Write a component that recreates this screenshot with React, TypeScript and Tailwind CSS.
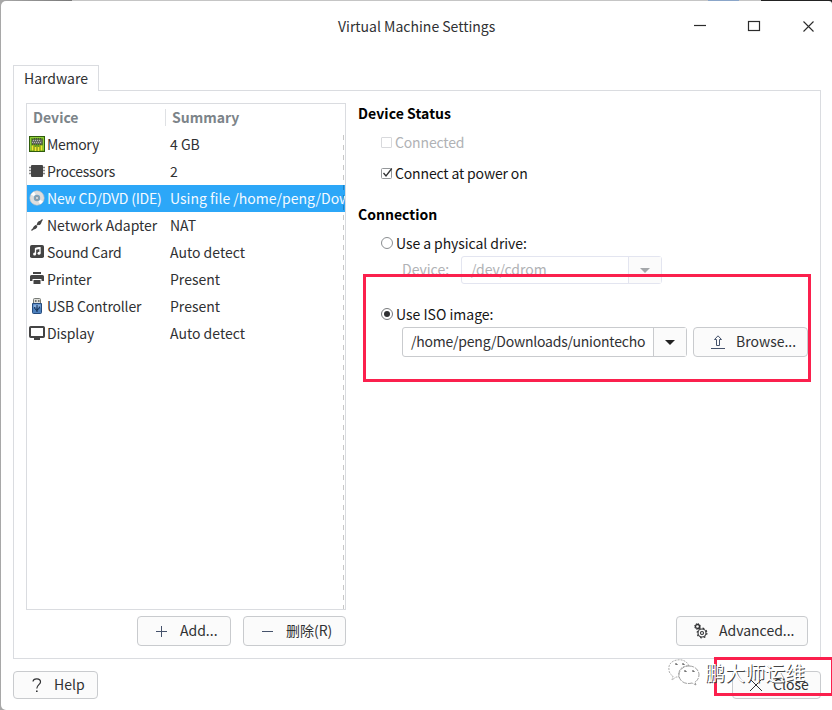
import React from "react";

const font =
  "font-['Noto_Sans_CJK_SC','Noto_Sans',sans-serif]";

type IconProps = { children: React.ReactNode; size?: number };

function Svg({ children, size = 16 }: IconProps) {
  return (
    <svg width={size} height={size} viewBox={`0 0 ${size} ${size}`} fill="none" className="block shrink-0">
      {children}
    </svg>
  );
}

const MemoryIcon = () => (
  <Svg>
    <rect x="0.500" y="0.500" width="15" height="15" fill="#62a01c" stroke="#2f5c0c" />
    <path d="M1.500 14.500V1.500H14.500V14.500" stroke="#92cf3b" />
    <path d="M3.500 3v6M5.500 2v7M7.500 2v7M9.500 2v7M11.500 2v7M13 3v6" stroke="#464a40" />
    <rect x="2.500" y="3.500" width="11" height="4.500" rx="2" fill="#666b61" />
    <path d="M4 4.500h8M3 6.500h9" stroke="#b4b7af" strokeDasharray="1 1" />
    <path d="M3.500 9.500v5M6.500 11v4M9.500 11v4M12.500 9.500v5" stroke="#f0e832" strokeWidth="1.800" />
    <path d="M5 9v5M11 9v5M8 10v5" stroke="#b4a51c" />
  </Svg>
);

const CpuIcon = () => (
  <Svg>
    <rect x="2" y="2" width="12" height="12" rx="1" fill="#444" />
    <path d="M0 4.500h2M0 7.500h2M0 10.500h2M14 4.500h2M14 7.500h2M14 10.500h2" stroke="#858585" strokeWidth="1.500" />
  </Svg>
);

const DiscIcon = () => (
  <Svg>
    <circle cx="8" cy="8" r="7.200" fill="#dedede" stroke="#c3c3c3" strokeWidth="0.600" />
    <path d="M8 8L2 4.500A7 7 0 0 1 5 1.700zM8 8l6 3.500a7 7 0 0 1-3 2.800z" fill="#fff" />
    <circle cx="8" cy="8" r="3.200" fill="#7ba4bf" />
    <circle cx="8" cy="8" r="2" fill="#969ba0" />
    <circle cx="8" cy="8" r="0.900" fill="#e2eef5" />
  </Svg>
);

const NetworkIcon = () => (
  <Svg>
    <path d="M2.500 13.500L13.500 2.500" stroke="#444" strokeWidth="1.200" />
    <path d="M4 12.500c-.2-2 .8-4 3-4.500l1.500 1.500c-.7 2-2.500 3.200-4.500 3zM8 6.500C8.500 4.500 10.500 3.500 12.800 3.500c0 2.200-1 4.300-3 4.800z" fill="#444" />
    <path d="M6.800 7.200l2.400 2.400" stroke="#fff" strokeWidth="0.800" />
  </Svg>
);

const SoundIcon = () => (
  <Svg>
    <rect x="1" y="1" width="14" height="13" rx="1.800" fill="#444" />
    <path d="M6.500 10V4.700l4.500-.9v5.200" stroke="#fff" strokeWidth="1.300" />
    <path d="M6.500 4.700l4.500-.7" stroke="#fff" strokeWidth="2" />
    <circle cx="5.600" cy="10.100" r="1.500" fill="#fff" />
    <circle cx="10" cy="9.300" r="1.500" fill="#fff" />
  </Svg>
);

const PrinterIcon = () => (
  <Svg>
    <path d="M4 1h8v2H4zM2.500 4h11A1.500 1.500 0 0 1 15 5.500V10h-2.500V8h-9v2H1V5.500A1.500 1.500 0 0 1 2.500 4zM4.500 9h7v4h-7z" fill="#444" />
  </Svg>
);

const UsbIcon = () => (
  <Svg>
    <rect x="4.500" y="0.500" width="7" height="6" rx="1" fill="#ddded9" stroke="#777a76" />
    <path d="M6 3h1.500M9 3h1.500" stroke="#50534f" strokeWidth="1.500" />
    <path d="M3.500 5.500h9v9q0 1-1 1h-7q-1 0-1-1z" fill="#4d80bd" stroke="#254b7c" />
    <path d="M4.500 6.500h7v3h-7z" fill="#86aede" />
    <path d="M8 7v7M5.700 9v1.500L8 12.500M10.300 8.500v1.800L8 12" stroke="#10294a" />
  </Svg>
);

const DisplayIcon = () => (
  <Svg>
    <path d="M1.800 1h12.400A1.800 1.800 0 0 1 16 2.800v8.400a1.800 1.800 0 0 1-1.800 1.800H11v2H5v-2H1.800A1.800 1.800 0 0 1 0 11.200V2.800A1.800 1.800 0 0 1 1.800 1zM2 3v8h12V3z" fill="#444" fillRule="evenodd" />
  </Svg>
);

const rows = [
  { name: "Memory", tracking: "tracking-[-0.3px]", summary: "4 GB", icon: <MemoryIcon /> },
  { name: "Processors", tracking: "tracking-[-0.28px]", summary: "2", icon: <CpuIcon /> },
  { name: "New CD/DVD (IDE)", tracking: "tracking-[-0.2px]", summary: "Using file /home/peng/Downloads", icon: <DiscIcon />, selected: true },
  { name: "Network Adapter", tracking: "tracking-[-0.03px]", summary: "NAT", icon: <NetworkIcon /> },
  { name: "Sound Card", tracking: "tracking-[-0.2px]", summary: "Auto detect", icon: <SoundIcon /> },
  { name: "Printer", tracking: "tracking-[-0.1px]", summary: "Present", icon: <PrinterIcon /> },
  { name: "USB Controller", tracking: "tracking-[-0.18px]", summary: "Present", icon: <UsbIcon /> },
  { name: "Display", tracking: "tracking-[-0.1px]", summary: "Auto detect", icon: <DisplayIcon /> },
];

function Button({ icon, label, className }: { icon: React.ReactNode; label: string; className: string }) {
  return (
    <button className={`flex shrink-0 items-center rounded border border-[#c9cbce] bg-[#fbfbfb] text-[#303133] ${className}`}>
      {icon}
      <span className="pb-[2px] whitespace-nowrap">{label}</span>
    </button>
  );
}

function DeviceTree() {
  return (
    <div className="relative h-[507px] w-[320px] overflow-hidden border border-[#dadce0]">
      <div className="flex h-[27px] items-center font-bold text-[#7c8489]">
        <div className="w-[138px] pb-[2px] pl-[6px]">Device</div>
        <div className="h-[17px] w-px bg-[#dfe1e4]" />
        <div className="pb-[2px] pl-[6px]">Summary</div>
      </div>
      {rows.map((r) => (
        <div
          key={r.name}
          className={`flex h-[27px] items-center pb-[2px] pl-[2px] whitespace-nowrap ${r.selected ? "bg-[#2ca7f8] text-[#f4faff]" : "text-[#303133]"}`}
        >
          {r.icon}
          <span className={`ml-[2px] w-[123px] shrink-0 ${r.tracking}`}>{r.name}</span>
          <span>{r.summary}</span>
        </div>
      ))}
      <div className="absolute top-[31px] bottom-0 left-[316px] w-px bg-[repeating-linear-gradient(to_bottom,rgba(0,0,0,0.22)_0px,rgba(0,0,0,0.22)_5px,transparent_5px,transparent_10px)]" />
    </div>
  );
}

function Settings() {
  return (
    <div className="flex h-[507px] w-[450px] flex-col text-[#161616]">
      <div className="h-[20px] font-bold leading-[20px] tracking-[0.06px] text-black">Device Status</div>
      <div className="mt-[9px] ml-[23px] flex h-[20px] items-center tracking-[-0.15px] text-[#b0b2b5]">
        <span className="mr-[3px] h-[11px] w-[11px] rounded-[1px] border border-[#d8d9dc]" />
        Connected
      </div>
      <div className="mt-[11px] ml-[23px] flex h-[20px] items-center tracking-[-0.15px]">
        <svg width="12" height="13" viewBox="0 0 12 13" fill="none" className="mr-[2px]">
          <rect x="0.500" y="1.500" width="10" height="10" rx="1" stroke="#94979a" />
          <path d="M2.500 6l2.500 3L10.800 1.500" stroke="#303133" strokeWidth="1.300" />
        </svg>
        Connect at power on
      </div>
      <div className="mt-[21px] h-[20px] font-bold leading-[20px] text-black">Connection</div>
      <div className="mt-[9px] ml-[23px] flex h-[20px] items-center tracking-[-0.07px]">
        <span className="mr-[3px] h-[12px] w-[12px] rounded-full border border-[#8b8e91]" />
        Use a physical drive:
      </div>
      <div className="mt-[3px] ml-[44px] flex h-[28px] items-center text-[#b0b2b5]">
        <span className="w-[59px] pb-[2px]">Device:</span>
        <div className="flex h-[28px] w-[201px] rounded-[3px] border border-[#e3e5f0]">
          <span className="w-[166px] pl-[9px] leading-[24px]">/dev/cdrom</span>
          <span className="flex grow items-center justify-center border-l border-[#e3e5f0] bg-[#fbfbfb]">
            <svg width="10" height="5" viewBox="0 0 10 5"><path d="M0 0h10L5 5z" fill="#a4a7aa" /></svg>
          </span>
        </div>
      </div>
      <div className="mt-[20px] ml-[23px] flex h-[20px] items-center">
        <svg width="12" height="12" viewBox="0 0 12 12" fill="none" className="mr-[3px]">
          <circle cx="6" cy="6" r="5.500" stroke="#77797c" />
          <circle cx="6" cy="6" r="3" fill="#303133" />
        </svg>
        Use ISO image:
      </div>
      <div className="mt-[3px] ml-[44px] flex gap-[6px]">
        <div className="flex h-[30px] w-[285px] rounded-[3px] border border-[#c9cbce] text-[#303133]">
          <span className="w-[250px] pl-[8px] leading-[26px] tracking-[-0.22px] whitespace-nowrap">/home/peng/Downloads/uniontecho</span>
          <span className="flex grow items-center justify-center border-l border-[#c9cbce] bg-[#fbfbfb]">
            <svg width="10" height="5" viewBox="0 0 10 5"><path d="M0 0h10L5 5z" fill="#222" /></svg>
          </span>
        </div>
        <Button
          className="h-[30px] w-[115px] gap-[11px] pl-[17px]"
          label="Browse..."
          icon={
            <svg width="14" height="14" viewBox="0 0 14 14" fill="none" stroke="#45526b">
              <path d="M0 13.500h14M5.500 10.500v-6H3.500L7 .8l3.500 3.700h-2v6z" />
            </svg>
          }
        />
      </div>
    </div>
  );
}

const AdvancedIcon = () => (
  <svg width="14" height="16" viewBox="0 0 14 16" fill="none" stroke="#303133">
    <circle cx="3.500" cy="3.500" r="2" strokeWidth="1.300" />
    <circle cx="3.500" cy="3.500" r="2.900" strokeWidth="1" strokeDasharray="1.200 1.080" />
    <circle cx="8" cy="10" r="4" strokeWidth="1.100" />
    <circle cx="8" cy="10" r="4.900" strokeWidth="1.100" strokeDasharray="1.800 2.050" />
    <circle cx="8" cy="10" r="1.500" strokeWidth="1.100" />
  </svg>
);

function Watermark() {
  return (
    <div className="absolute top-[658px] left-[667px] flex items-center">
      <svg width="33" height="30" viewBox="0 0 33 30" fill="none">
        <path d="M22 8C20 3 15 1 10 2 4 3 1 7 2 12c0 3 2 5 4 6l-1 4 4-3h3C10 12 16 7 22 8z" fill="#fff" stroke="#999" strokeWidth="0.800" strokeDasharray="2 1" />
        <path d="M22 8c6 0 10 4 10 9 0 3-2 6-4 7l1 3-4-2c-7 2-13-2-13-8 0-5 4-9 10-9z" fill="#fff" stroke="#888" strokeWidth="0.800" strokeDasharray="5 1" />
        <path d="M8 6h2v1M15 6h2v1M17 13h2v1M25 13h2v1" stroke="#444" />
      </svg>
      <span className="ml-[5px] text-[20px] leading-[30px] whitespace-nowrap text-white [text-shadow:1px_1px_0_#444]">
        鹏大师运维
      </span>
    </div>
  );
}

export default function App() {
  return (
    <div className={`relative h-[710px] w-[832px] overflow-hidden bg-[linear-gradient(to_right,#a8a8a8_0px,#777_72px,#c5c5c5_72px,#c5c5c5_708px,#8ba6c9_708px,#8ba6c9_739px,#c5c5c5_739px,#c5c5c5_761px,#222_761px)] pt-px pl-px text-[14px] leading-[20px] ${font}`}>
      <div className="h-[709px] w-[831px] rounded-l-[5px] rounded-tr-[3px] bg-white">
        <header className="flex h-[64px] items-start">
          <div className="w-[337px]" />
          <div className="mt-[15px] w-[356px] whitespace-nowrap text-[#303133]">Virtual Machine Settings</div>
          <svg width="124" height="14" viewBox="0 0 124 14" fill="none" stroke="#2b2b2b" className="mt-[18px]" >
            <path d="M0 6.500h12" strokeWidth="1.200" />
            <rect x="54.500" y="2.500" width="11" height="9" strokeWidth="1.200" />
            <path d="M109.500 2.500l10 10M119.500 2.500l-10 10" strokeWidth="1.100" />
          </svg>
        </header>
        <main className="ml-[12px] w-[808px]">
          <div className="relative z-10 h-[26px] w-[86px] border border-b-0 border-[#dadce0] bg-white pl-[10px] leading-[24px] text-[#303133]">Hardware</div>
          <section className="-mt-px h-[569px] border border-[#dadce0] px-[12px] pt-[12px]">
            <div className="flex gap-[12px]">
              <DeviceTree />
              <Settings />
            </div>
            <div className="mt-[6px] flex">
              <Button className="ml-[111px] h-[30px] w-[94px] gap-[13px] pl-[18px]" label="Add..." icon={<svg width="11" height="11" viewBox="0 0 11 11" stroke="#45526b"><path d="M0 5.500h11M5.500 0v11" /></svg>} />
              <Button className="ml-[12px] h-[30px] w-[103px] gap-[13px] pl-[18px]" label="删除(R)" icon={<svg width="11" height="11" viewBox="0 0 11 11" stroke="#45526b"><path d="M0 5.500h11" /></svg>} />
              <Button className="ml-auto h-[30px] w-[132px] gap-[11px] pl-[17px]" label="Advanced..." icon={<AdvancedIcon />} />
            </div>
          </section>
          <footer className="mt-[12px] flex justify-between">
            <Button className="h-[28px] w-[85px] gap-[12px] pl-[18px]" label="Help" icon={<svg width="10" height="15" viewBox="0 0 10 15" fill="none" stroke="#303133" strokeWidth="1.200"><path d="M1 3.500C1.500 0 8.500 0 8.500 4c0 2.500-3.700 3-3.700 6.500" /><path d="M4 12.500h1.600v1.600H4z" fill="#303133" stroke="none" /></svg>} />
            <Button className="h-[28px] w-[89px] gap-[10px] pl-[16px]" label="Close" icon={<svg width="14" height="14" viewBox="0 0 14 14" stroke="#303133"><path d="M1 1l12 12M13 1L1 13" /></svg>} />
          </footer>
        </main>
      </div>
      <div className="absolute top-[274px] left-[363px] h-[108px] w-[448px] border-3 border-[#fb204d]" />
      <div className="absolute top-[657px] left-[714px] h-[39px] w-[120px] border-3 border-[#fb204d]" />
      <Watermark />
    </div>
  );
}
